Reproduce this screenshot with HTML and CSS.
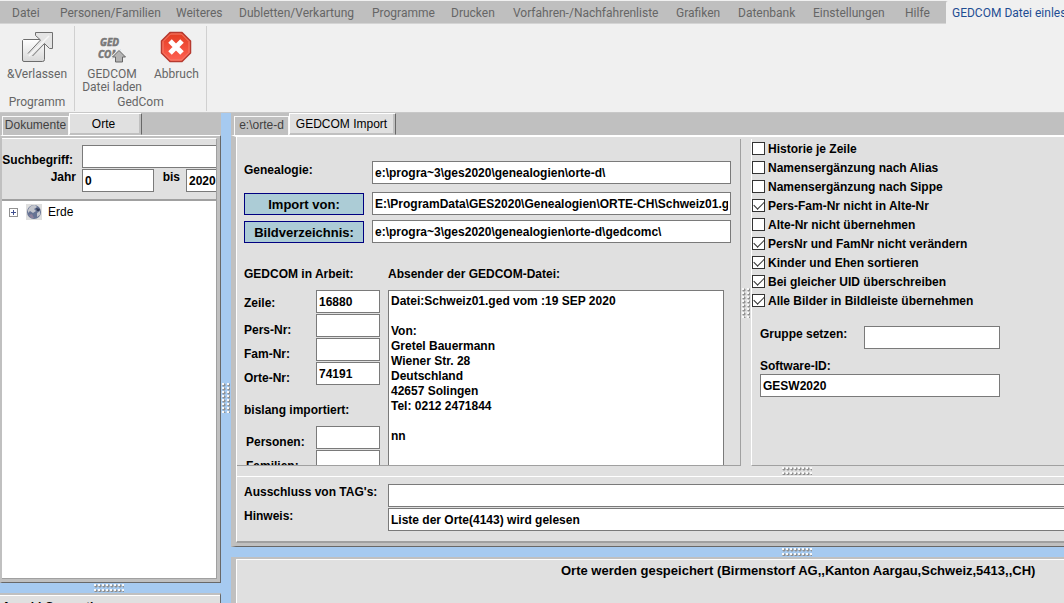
FILE: index.html
```html
<!DOCTYPE html>
<html lang="de">
<head>
<meta charset="utf-8">
<title>GEDCOM Datei einlesen</title>
<link rel="stylesheet" href="styles.css">
</head>
<body>
<nav class="menu">
  <a href="#">Datei</a><a href="#">Personen/Familien</a><a href="#">Weiteres</a><a href="#">Dubletten/Verkartung</a><a href="#">Programme</a><a href="#">Drucken</a><a href="#">Vorfahren-/Nachfahrenliste</a><a href="#">Grafiken</a><a href="#">Datenbank</a><a href="#">Einstellungen</a><a href="#">Hilfe</a><a class="active" href="#">GEDCOM Datei einlesen</a>
</nav>
<header class="ribbon">
  <section class="group group-program">
    <div class="tools">
      <button class="tool" type="button">
        <svg width="32" height="32" viewBox="0 0 32 32" aria-hidden="true">
          <defs><linearGradient id="sheet" x1="0" y1="0" x2="0" y2="1"><stop offset="0" stop-color="#ffffff"/><stop offset="1" stop-color="#d8d8d8"/></linearGradient></defs>
          <path d="M2.500 8.500H22q1.500 0 1.500 1.500V28.500q0 2-2 2H3q-1.500 0-1.500-1.500V9.500z" fill="url(#sheet)" stroke="#6c6c6c"/>
          <path d="M6 25L19.500 9L14.500 4.500V1.500H31V18H28.500L23 12.500L11 26z" fill="#e4e4e4"/>
          <path d="M7 22.500L19.500 9L14.500 4.500V1.500H31.500V17.500H28.500L23.500 12.500L11.500 25" fill="none" stroke="#707070"/>
          <path d="M8 25L28 5" stroke="#f6f6f6" stroke-width="1.500"/>
        </svg>
        <span>&amp;Verlassen</span>
      </button>
    </div>
    <h2 class="caption">Programm</h2>
  </section>
  <section class="group group-gedcom">
    <div class="tools">
      <button class="tool" type="button">
        <svg width="32" height="32" viewBox="0 0 32 32" aria-hidden="true">
          <text class="logo" x="4" y="15">GED</text>
          <text class="logo" x="2" y="27">COM</text>
          <path d="M23 19.500L29.500 26H26.500V31H19.500V26H16.500z" fill="#b0b0b0" stroke="#f0f0f0" stroke-width="3"/>
          <path d="M23 19.500L29.500 26H26.500V31H19.500V26H16.500z" fill="#b4b4b4" stroke="#666"/>
        </svg>
        <span>GEDCOM<br>Datei laden</span>
      </button>
      <button class="tool" type="button">
        <svg width="32" height="32" viewBox="0 0 32 32" aria-hidden="true">
          <defs><linearGradient id="stop" x1="0" y1="0" x2="0" y2="1"><stop offset="0" stop-color="#e33b20"/><stop offset="1" stop-color="#ff6254"/></linearGradient></defs>
          <path d="M10 1.500H22L30.500 10V22L22 30.500H10L1.500 22V10z" fill="url(#stop)" stroke="#b63a30" stroke-width="1.500" stroke-linejoin="round"/>
          <path d="M10.500 3H21.500L29 10.500V21.500L21.500 29H10.500L3 21.500V10.500z" fill="none" stroke="#f5806c"/>
          <path d="M10 10L22 22M22 10L10 22" stroke="#fff" stroke-width="5"/>
        </svg>
        <span>Abbruch</span>
      </button>
    </div>
    <h2 class="caption">GedCom</h2>
  </section>
</header>
<main class="workspace">
  <aside class="side">
    <div class="tabs">
      <button class="tab" type="button">Dokumente</button>
      <button class="tab current orte" type="button">Orte</button>
    </div>
    <div class="frame side-frame">
      <form class="search">
        <label for="term">Suchbegriff:</label><input class="field term" id="term">
        <label for="from">Jahr</label><input class="field" id="from" value="0">
        <label for="to">bis</label><input class="field" id="to" value="2020">
      </form>
      <ul class="tree">
        <li><button class="expand" type="button" aria-label="Erde aufklappen"></button>
          <svg width="16" height="16" viewBox="0 0 16 16" aria-hidden="true"><rect width="16" height="16" fill="#dedede"/><circle cx="8" cy="8" r="7" fill="#667394"/><path d="M2 6Q4 1 9 1L11 3L8 5L10 7L7 9L4 7L2 9zM11 9L14 7L14 11L11 13z" fill="#c3c5cc"/><path d="M3 11L6 10L8 14L5 14z" fill="#8c819c"/><path d="M10 4L14 5L13 7L11 7z" fill="#333c58"/></svg>
          <span>Erde</span></li>
      </ul>
    </div>
    <div class="splitter blue"><i class="grip"></i></div>
    <div class="side-foot"><p>Anzahl Generationen</p></div>
  </aside>
  <div class="divider main-divider"><i class="grip upright"></i></div>
  <section class="content">
    <div class="tabs">
      <button class="tab path" type="button">e:\orte-d</button>
      <button class="tab current import" type="button">GEDCOM Import</button>
    </div>
    <div class="frame page">
      <div class="upper">
        <form class="pane source">
          <div class="paths">
            <label for="gen">Genealogie:</label><input class="field" id="gen" value="e:\progra~3\ges2020\genealogien\orte-d\">
            <button class="pick" type="button">Import von:</button><input class="field" aria-label="Import von" value="E:\ProgramData\GES2020\Genealogien\ORTE-CH\Schweiz01.ged">
            <button class="pick" type="button">Bildverzeichnis:</button><input class="field" aria-label="Bildverzeichnis" value="e:\progra~3\ges2020\genealogien\orte-d\gedcomc\">
          </div>
          <div class="progress">
            <div class="counts">
              <h3>GEDCOM in Arbeit:</h3>
              <div class="row first"><label for="zeile">Zeile:</label><input class="field" id="zeile" value="16880"></div>
              <div class="row"><label for="pers">Pers-Nr:</label><input class="field" id="pers"></div>
              <div class="row"><label for="fam">Fam-Nr:</label><input class="field" id="fam"></div>
              <div class="row"><label for="orte">Orte-Nr:</label><input class="field" id="orte" value="74191"></div>
              <h3 class="so-far">bislang importiert:</h3>
              <div class="row inset"><label for="persons">Personen:</label><input class="field" id="persons"></div>
              <div class="row inset"><label for="families">Familien:</label><input class="field" id="families"></div>
            </div>
            <div class="sender">
              <h3><label for="sender">Absender der GEDCOM-Datei:</label></h3>
              <textarea id="sender">Datei:Schweiz01.ged vom :19 SEP 2020

Von:
Gretel Bauermann
Wiener Str. 28
Deutschland
42657 Solingen
Tel: 0212 2471844

nn</textarea>
            </div>
          </div>
        </form>
        <div class="divider plain"><i class="grip upright"></i></div>
        <form class="pane options">
          <label class="check"><input type="checkbox">Historie je Zeile</label>
          <label class="check"><input type="checkbox">Namensergänzung nach Alias</label>
          <label class="check"><input type="checkbox">Namensergänzung nach Sippe</label>
          <label class="check"><input type="checkbox" checked>Pers-Fam-Nr nicht in Alte-Nr</label>
          <label class="check"><input type="checkbox">Alte-Nr nicht übernehmen</label>
          <label class="check"><input type="checkbox" checked>PersNr und FamNr nicht verändern</label>
          <label class="check"><input type="checkbox" checked>Kinder und Ehen sortieren</label>
          <label class="check"><input type="checkbox" checked>Bei gleicher UID überschreiben</label>
          <label class="check"><input type="checkbox" checked>Alle Bilder in Bildleiste übernehmen</label>
          <div class="assign">
            <label for="group">Gruppe setzen:</label><input class="field" id="group">
            <label class="wide" for="software">Software-ID:</label><input class="field wide" id="software" value="GESW2020">
          </div>
        </form>
      </div>
      <div class="splitter"><i class="grip"></i></div>
      <form class="notes">
        <label for="tags">Ausschluss von TAG's:</label><input class="field" id="tags">
        <label for="hint">Hinweis:</label><input class="field" id="hint" value="Liste der Orte(4143) wird gelesen">
      </form>
    </div>
    <div class="splitter blue"><i class="grip"></i></div>
    <div class="status"><p>Orte werden gespeichert (Birmenstorf AG,,Kanton Aargau,Schweiz,5413,,CH)</p></div>
  </section>
</main>
</body>
</html>
```
FILE: styles.css
```css
* { box-sizing: border-box; }
body {
  margin: 0;
  height: 100vh;
  overflow: hidden;
  display: flex;
  flex-direction: column;
  background: #f0f0f0;
  color: #000;
  font: bold 12px/16px "Liberation Sans", Arial, sans-serif;
}
h2, h3, p, ul { margin: 0; padding: 0; font: inherit; }
button, input, textarea { font: inherit; color: inherit; border-radius: 0; }

/* Menu and ribbon */
.menu {
  flex: none;
  height: 24px;
  padding-left: 6px;
  display: grid;
  grid-template-columns: 48px 116px 63px 133px 79px 62px 163px 62px 75px 92px 41px 1fr;
  background: #bfbfbf;
  border-top: 1px solid #f0f0f0;
  border-bottom: 1px solid #d4d4d4;
  font: 12px/24px Roboto, "Open Sans", sans-serif;
}
.menu a {
  padding-left: 6px;
  color: #666;
  text-decoration: none;
  white-space: nowrap;
}
.menu .active {
  height: 23px;
  margin-left: 6px;
  background: #f0f0f0;
  border-radius: 2px 0 0 0;
  color: #1f4e93;
}
.ribbon {
  flex: none;
  height: 89px;
  padding-top: 2px;
  display: flex;
  border-bottom: 1px solid #c8c8c8;
  color: #666;
  font: 12px/13px Roboto, "Open Sans", sans-serif;
}
.group {
  height: 85px;
  display: flex;
  flex-direction: column;
  justify-content: space-between;
  border-right: 1px solid #d0d0d0;
  text-align: center;
}
.group-program { width: 75px; }
.group-gedcom { width: 132px; }
.tools { display: flex; justify-content: center; gap: 12px; padding-top: 5px; }
.tool {
  display: flex;
  flex-direction: column;
  align-items: center;
  gap: 5px;
  padding: 0;
  border: 0;
  background: none;
  white-space: nowrap;
}
.caption { padding-bottom: 2px; }
.logo { font: italic bold 10px "Open Sans", sans-serif; fill: #777; stroke: #777; stroke-width: 0.5px; }

/* Workspace */
.workspace { flex: 1; min-height: 0; display: grid; grid-template-columns: 221px 10px 1fr; background: #a6caf0; }
.side, .content { min-width: 0; min-height: 0; display: flex; flex-direction: column; }
.tabs {
  flex: none;
  height: 22px;
  padding-left: 2px;
  display: flex;
  align-items: flex-end;
  background: #c0c0c0;
  font-weight: normal;
}
.tab {
  height: 19px;
  padding: 0 4px 2px;
  border: 1px solid #f8f8f8;
  border-width: 1px 1px 0;
  background: #c0c0c0;
  color: #404040;
  white-space: nowrap;
}
.side .tab { width: 67px; padding: 0 0 2px; }
.tab.current {
  height: 22px;
  background: #e0e0e0;
  border: 1px solid #fff;
  border-right: 1px solid #686868;
  border-bottom-color: #c0c0c0;
  box-shadow: inset -2px -1px #c0c0c0;
  color: #000;
}
.side .tab.orte { width: 73px; padding: 0 4px 0 0; }
.content .tabs { padding-left: 3px; }
.path { width: 55px; }
.tab.import { width: 107px; padding: 0 2px 0 0; }
.frame { flex: 1; min-height: 0; display: flex; flex-direction: column; background: #c0c0c0; }
.side-frame {
  border: 1px solid #686868;
  border-top-color: #fff;
  border-left: 2px solid #c0c0c0;
  padding: 2px 3px 3px 0;
}
.search {
  flex: none;
  height: 63px;
  padding-top: 6px;
  display: grid;
  grid-template-columns: 80px 72px 32px 90px;
  grid-auto-rows: 23px;
  row-gap: 1px;
  overflow: hidden;
  background: #e0e0e0;
  border-top: 1px solid #fff;
  border-right: 1px solid #a0a0a0;
  border-bottom: 2px solid #a0a0a0;
}
.search label { justify-self: end; padding-right: 6px; }
.search label:first-child { align-self: end; padding-right: 9px; }
.search .term { grid-column: span 3; }
.field {
  min-width: 0;
  width: 100%;
  height: 23px;
  padding: 0 2px;
  border: 1px solid #7a7a7a;
  background: #fff;
  outline: 0;
}
.tree {
  flex: 1;
  background: #fff;
  border: solid #a0a0a0;
  border-width: 0 1px 1px 0;
  list-style: none;
  font-weight: normal;
}
.tree li { display: flex; align-items: center; padding: 3px 7px; }
.tree span { margin-left: 6px; }
.expand {
  width: 9px;
  height: 9px;
  margin-right: 8px;
  padding: 0;
  border: 1px solid #919191;
  background:
    linear-gradient(#404f8f, #404f8f) center / 5px 1px no-repeat,
    linear-gradient(#404f8f, #404f8f) center / 1px 5px no-repeat, #fff;
}
.side-foot { height: 10px; overflow: hidden; background: #e0e0e0; border-top: 2px solid #c0c0c0; border-right: 1px solid #686868; box-shadow: inset 0 1px #fff; }
.side-foot p { padding: 4px 2px 0; font-weight: bold; }

/* Splitters */
.splitter { flex: none; height: 10px; display: flex; justify-content: center; align-items: center; }
.side .splitter { padding-right: 3px; }
.divider { display: flex; justify-content: center; align-items: center; }
.main-divider { padding-top: 80px; }
.grip {
  width: 30px;
  height: 8px;
  background:
    radial-gradient(circle at 1px 1px, #f8f8f8 1px, transparent 1px) 0 0 / 4px 5px,
    radial-gradient(circle at 2px 2px, #909090 1px, transparent 2px) 0 0 / 4px 5px;
}
.grip.upright { width: 8px; height: 30px; background-size: 5px 4px; }
.content .splitter { justify-content: flex-start; padding-left: 545px; }
.content .splitter.blue { padding-left: 551px; }

/* Import page */
.page {
  padding-bottom: 3px;
  border-style: solid;
  border-width: 2px 0 1px 5px;
  border-color: #fff #fff #686868 #c0c0c0;
}
.upper, .page .splitter, .notes { background: #e0e0e0; border-left: 1px solid #fff; }
.upper { flex: 1; min-height: 0; display: flex; padding-top: 2px; }
.pane { overflow: hidden; border-bottom: 1px solid #a0a0a0; }
.source { width: 504px; flex: none; padding: 22px 9px 0 7px; border-right: 1px solid #a0a0a0; }
.paths { display: grid; grid-template-columns: 120px 1fr; column-gap: 8px; grid-template-rows: 31px 28px 23px; }
.paths label { padding-top: 1px; }
.pick { height: 22px; padding: 1px 0 0; border: 1px solid #000080; background: #acccd6; font-size: 13px; margin-top: 1px; }
.progress { display: grid; grid-template-columns: 136px 336px; column-gap: 8px; margin-top: 23px; }
h3 { height: 24px; }
.row { height: 24px; display: grid; grid-template-columns: 72px 64px; align-items: start; }
.row label { padding-top: 8px; }
.row.first label { padding-top: 5px; }
.row.inset label { padding-left: 2px; }
.counts .so-far { padding-top: 16px; height: 40px; }
textarea {
  display: block;
  width: 100%;
  height: 240px;
  padding: 3px 2px;
  border: 1px solid #7a7a7a;
  background: #fff;
  line-height: 15px;
  resize: none;
  outline: 0;
  overflow: hidden;
}
.plain { flex: none; width: 10px; }
.options { flex: 1; border-left: 1px solid #fff; }
.check { display: flex; align-items: center; gap: 3px; height: 19px; }
.check input {
  appearance: none;
  display: grid;
  place-items: center;
  width: 13px;
  height: 13px;
  margin: 0;
  border: 1px solid #333;
  background: #fff;
}
.check input:checked::after {
  content: "";
  width: 9px;
  height: 5px;
  margin-bottom: 3px;
  border: solid #333;
  border-width: 0 0 1px 1px;
  transform: rotate(-45deg);
}
.assign {
  width: 240px;
  margin: 16px 0 0 8px;
  display: grid;
  grid-template-columns: 104px 1fr;
  grid-template-rows: 32px 16px 23px;
}
.wide { grid-column: 1 / -1; }
.notes {
  flex: none;
  height: 67px;
  padding: 7px 0 0 7px;
  display: grid;
  grid-template-columns: 144px 1fr;
  grid-auto-rows: 23px;
  row-gap: 1px;
  border-top: 1px solid #fff;
  border-bottom: 2px solid #a0a0a0;
}
.notes .field { border-right: 0; }
.status {
  flex: none;
  height: 46px;
  padding-left: 325px;
  background: #e0e0e0;
  border: solid;
  border-width: 2px 0 0 5px;
  border-color: #c0c0c0;
  box-shadow: inset 1px 1px #fff;
  font-size: 13px;
  white-space: nowrap;
}
.status p { padding-top: 4px; }
```
